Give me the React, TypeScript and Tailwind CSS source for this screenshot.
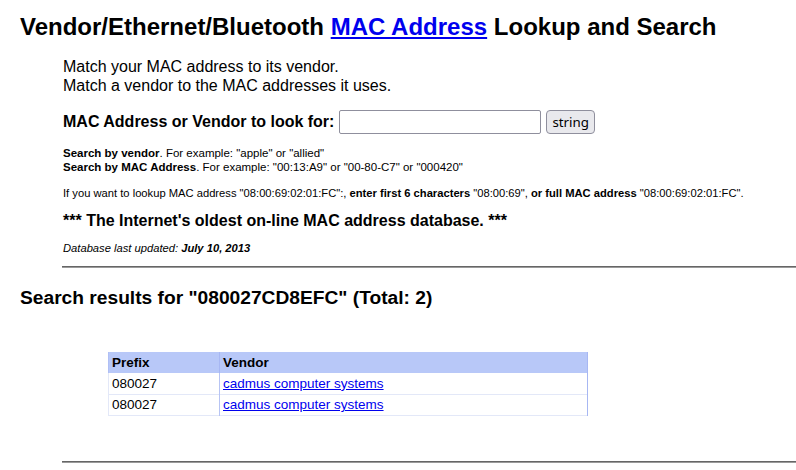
export default function App() {
  return (
    <div className="min-h-[470px] bg-white text-black pl-[20px] pt-[13px]" style={{ fontFamily: '"Liberation Sans", Arial, sans-serif' }}>
      <h1 className="text-[24px] leading-[28px] font-bold">
        Vendor/Ethernet/Bluetooth <a href="#" className="text-[#0000ee] underline">MAC Address</a> Lookup and Search
      </h1>
      <div className="pl-[43px]">
        <div className="mt-[16px] text-[16px] leading-[19px]">
          <div>Match your MAC address to its vendor.</div>
          <div>Match a vendor to the MAC addresses it uses.</div>
        </div>
        <div className="mt-[15px] flex items-center h-[24px]">
          <span className="text-[16px] font-bold">MAC Address or Vendor to look for:</span>
          <input type="text" className="ml-[5px] w-[202px] h-[24px] border border-[#8f8f9d] rounded-[2px] bg-white" />
          <button className="ml-[5px] h-[24px] px-[5px] border border-[#8f8f9d] rounded-[4px] bg-[#e9e9ed] text-[13.33px] leading-[20px]" style={{ fontFamily: '"Noto Sans", sans-serif' }}>string</button>
        </div>
        <div className="mt-[12px] text-[11.5px] leading-[14px]">
          <div><b>Search by vendor</b>. For example: "apple" or "allied"</div>
          <div><b>Search by MAC Address</b>. For example: "00:13:A9" or "00-80-C7" or "000420"</div>
        </div>
        <div className="mt-[12px] text-[11.2px] leading-[14px]">
          If you want to lookup MAC address "08:00:69:02:01:FC":, <b>enter first 6 characters</b> "08:00:69", <b>or full MAC address</b> "08:00:69:02:01:FC".
        </div>
        <div className="mt-[11px] text-[16px] leading-[19px] font-bold">*** The Internet's oldest on-line MAC address database. ***</div>
        <div className="mt-[11px] text-[11.2px] leading-[14px] italic">Database last updated: <b>July 10, 2013</b></div>
      </div>
      <div className="ml-[42px] mt-[11px] border-t border-b border-t-[#666666] border-b-[#9a9a9a] h-[2px]"></div>
      <h2 className="mt-[19px] text-[19.2px] leading-[22px] font-bold">Search results for "080027CD8EFC" (Total: 2)</h2>
      <div className="pl-[88px] mt-[43px]">
        <table className="w-[480px] border-collapse text-[13.5px] leading-[15px]">
          <thead>
            <tr className="bg-[#b8c8f8]">
              <th className="text-left font-bold h-[21px] px-[3px] w-[111px] border-l border-[#b0bff5]">Prefix</th>
              <th className="text-left font-bold px-[3px] border-l border-r border-[#a7b7f3]">Vendor</th>
            </tr>
          </thead>
          <tbody>
            {[0, 1].map((i) => (
              <tr key={i} className="border-b border-[#e3e8f8]">
                <td className="h-[21px] px-[3px] border-l border-[#e3e8f8]">080027</td>
                <td className="px-[3px] border-l border-[#b7c4f4] border-r border-r-[#a7b7f3]">
                  <a href="#" className="text-[#0000ee] underline">cadmus computer systems</a>
                </td>
              </tr>
            ))}
          </tbody>
        </table>
      </div>
      <div className="ml-[42px] mt-[45px] border-t border-b border-t-[#666666] border-b-[#9a9a9a] h-[2px]"></div>
    </div>
  );
}
